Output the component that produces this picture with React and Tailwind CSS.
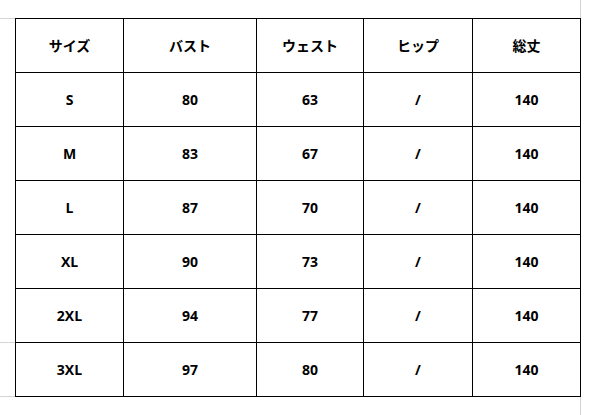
import React from 'react';

const headers = ['サイズ', 'バスト', 'ウェスト', 'ヒップ', '総丈'];

const rows = [
  ['S', '80', '63', '/', '140'],
  ['M', '83', '67', '/', '140'],
  ['L', '87', '70', '/', '140'],
  ['XL', '90', '73', '/', '140'],
  ['2XL', '94', '77', '/', '140'],
  ['3XL', '97', '80', '/', '140'],
];

const widths = ['w-[108px]', 'w-[133px]', 'w-[107px]', 'w-[109px]', 'w-[108px]'];

export default function App() {
  return (
    <div
      className="flex w-[600px] h-[415px] bg-white overflow-hidden"
      style={{ fontFamily: '"Open Sans", "Noto Sans CJK JP", sans-serif' }}
    >
      {/* faint sheet gridlines left of the table */}
      <div className="flex flex-col w-[15px] shrink-0 pt-[18px]">
        <div className="h-[324px] border-t border-[#d4d4d4]" />
        <div className="h-[55px] border-t border-b border-[#d4d4d4]" />
      </div>

      <div className="pt-[18px] shrink-0">
        <table className="table-fixed border-collapse w-[565px] text-black">
          <colgroup>
            {widths.map((w, i) => (
              <col key={i} className={w} />
            ))}
          </colgroup>
          <thead>
            <tr className="h-[54px]">
              {headers.map((h) => (
                <th key={h} className="border border-black text-[14px] font-bold text-center align-middle p-0">
                  {h}
                </th>
              ))}
            </tr>
          </thead>
          <tbody>
            {rows.map((r) => (
              <tr key={r[0]} className="h-[54px]">
                {r.map((c, i) => (
                  <td key={i} className="border border-black text-[14px] font-bold text-center align-middle p-0">
                    {c}
                  </td>
                ))}
              </tr>
            ))}
          </tbody>
        </table>
      </div>

      {/* faint sheet gridline right of the table */}
      <div className="flex flex-col w-px shrink-0 -ml-px">
        <div className="h-[18px] border-l border-[#d4d4d4]" />
        <div className="h-[379px]" />
        <div className="h-[18px] border-l border-[#d4d4d4]" />
      </div>
    </div>
  );
}
